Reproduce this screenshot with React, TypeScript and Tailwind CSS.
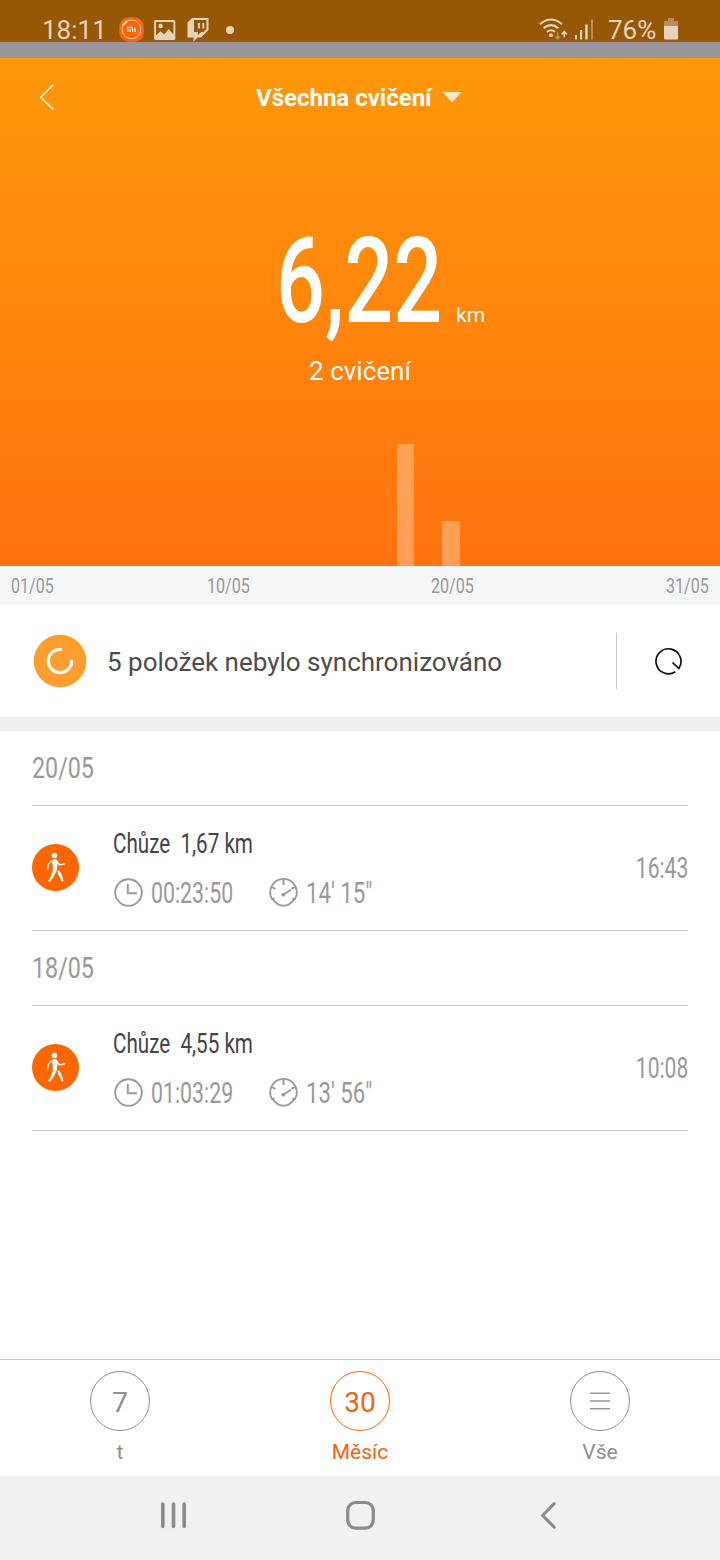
import React from 'react';
import clsx from 'clsx';

const DAYS_IN_MONTH = 31;

// distance per day of the month
const distances: Record<number, number> = { 18: 4.55, 20: 1.67 };
const maxDistance = Math.max(...Object.values(distances));

const axisLabels = ['01/05', '10/05', '20/05', '31/05'];

const groups = [
  { date: '20/05', distance: '1,67 km', duration: '00:23:50', pace: '14′ 15″', time: '16:43' },
  { date: '18/05', distance: '4,55 km', duration: '01:03:29', pace: '13′ 56″', time: '10:08' },
];

// Narrow lettering: Roboto squeezed horizontally, the scale is set per use
const Narrow: React.FC<{ className?: string; children: React.ReactNode }> = ({ className, children }) => (
  <span className={clsx('inline-block whitespace-pre', className)}>{children}</span>
);

const MiIcon = () => (
  <svg width="25" height="25" viewBox="0 0 25 25" fill="none">
    <rect x="0.3" y="0.3" width="24.4" height="24.4" rx="9" fill="#ff6405" />
    <circle cx="12.4" cy="12.3" r="9.4" stroke="#f7dcc0" strokeWidth="1" />
    <path d="M4.4 7.6 7.6 4.6" stroke="#fff" strokeWidth="1.8" strokeLinecap="round" />
    <path d="M8.8 15v-4.6h3.4q1.4 0 1.4 1.4V15M11.2 12v3M16 10.4V15" stroke="#fff" strokeWidth="1.2" />
  </svg>
);

const PictureIcon = () => (
  <svg width="22" height="20" viewBox="0 0 22 20" fill="#e6d3bb">
    <path fillRule="evenodd" d="M1.6 0h18.2Q21.3 0 21.3 1.5v17q0 1.5-1.5 1.5H1.6Q.1 20 .1 18.5v-17Q.1 0 1.6 0ZM2 1.9v13.600l4.600-4.300 3.600 3.200 4.500-5.400 4.700 5.400V1.900Z" />
    <circle cx="6.600" cy="6" r="2.200" />
  </svg>
);

const TwitchIcon = () => (
  <svg width="22" height="24" viewBox="0 0 22 24">
    <path fillRule="evenodd" fill="#e6d3bb" d="M5 0h16.500v12L14 19.500h-3.500L6.500 24v-4.500H.5V4.500ZM7 2v12h4v3l3-3h2.500l3-3V2Z" />
    <path d="M11.900 5v5.500M16.300 5v5.500" stroke="#e6d3bb" strokeWidth="1.900" />
  </svg>
);

const WifiIcon = () => (
  <svg width="29" height="24" viewBox="0 0 29 24" fill="none" stroke="#e6d3bb" strokeWidth="2">
    <path d="M1 6.300Q12 -3.200 23 6.300M4.600 10.300Q12 4 19.400 10.300M8 14Q12 10.600 16 14" />
    <circle cx="12" cy="17.300" r="2" fill="#e6d3bb" stroke="none" />
    <path d="M18.700 14.500v6M16.300 18.300l2.400 2.500 2.400-2.500" stroke="#b88d57" strokeWidth="1.700" />
    <path d="M25.200 19.300v-5.500M22.700 16.300l2.500-2.700 2.500 2.700" strokeWidth="1.700" />
  </svg>
);

const SignalIcon = () => (
  <svg width="19" height="21" viewBox="0 0 19 21" fill="#e6d3bb">
    <rect x="0" y="16" width="2" height="4.500" />
    <rect x="5" y="11" width="2.200" height="9.500" />
    <rect x="10.200" y="5.500" width="2.500" height="15" />
    <rect x="16" y="0.500" width="2" height="20" fill="#b88d57" />
  </svg>
);

const BatteryIcon = () => (
  <svg className="mb-[2px]" width="14" height="22" viewBox="0 0 14 22">
    <path d="M4 0h6v3h4v6H0V3h4Z" fill="#b88d57" />
    <path d="M0 8h14v12.500q0 1-1 1H1q-1 0-1-1Z" fill="#e6d3bb" />
  </svg>
);

const WalkIcon = () => (
  <svg className="mb-px" width="47" height="47" viewBox="0 0 47 47" fill="#fff">
    <circle cx="23.500" cy="23.500" r="23.500" fill="#ff6600" />
    <circle cx="22.400" cy="11.500" r="2.800" />
    <path d="M20.100 15.900Q22.800 14.200 25.300 15.900L25.500 20 24.900 26Q22.500 33 18 37.700L16.200 36.800Q20.500 30 20.800 25Z" />
    <path d="M25.300 27 27.300 26.600Q30 30 31.500 37L29.400 37.500Q28.500 33 26.300 31Z" />
    <path d="M19.800 16.800 16.300 20.300 15.600 25.200M25.300 18 27.400 20.900 32.600 19.700" fill="none" stroke="#fff" strokeWidth="1.500" strokeLinecap="round" strokeLinejoin="round" />
  </svg>
);

const ClockIcon = () => (
  <svg width="29" height="29" viewBox="0 0 29 29" fill="none" stroke="#999" strokeWidth="1.900">
    <circle cx="14.500" cy="14.500" r="13.300" />
    <path d="M13.800 6v9.200h9" />
  </svg>
);

const PaceIcon = () => (
  <svg width="29" height="29" viewBox="0 0 29 29" fill="none" stroke="#999" strokeWidth="1.900">
    <path d="M4.300 21.800Q1.200 19.600 1.200 14.200A13.300 13.300 0 0 1 27.800 14.200Q27.800 19.600 24.700 21.800Q20 27.700 14.500 27.700T4.300 21.800Z" />
    <path d="M14.500 1.500v5.500M2.900 9l3.600 1.800M26.100 9l-3.600 1.800M2.400 21.200l3.200-.8M26.600 21.200l-3.200-.8M14.500 16.500l7.500-4.700" />
    <circle cx="14.300" cy="16.700" r="1.900" fill="#999" stroke="none" />
  </svg>
);

const StatusBar = () => (
  <header className="flex h-[42px] items-center bg-[#965804] pl-[42px] pr-[42px] pt-[17px] text-[26px] text-[#e6d3bb]">
    <span className="w-[77px] leading-none">18:11</span>
    <MiIcon />
    <span className="ml-[10px]"><PictureIcon /></span>
    <span className="ml-[11px]"><TwitchIcon /></span>
    <span className="ml-[17px] size-2 rounded-full bg-[#e6d3bb]" />
    <span className="ml-auto"><WifiIcon /></span>
    <span className="ml-[7px]"><SignalIcon /></span>
    <span className="ml-[14px] w-[56px] leading-none">76%</span>
    <BatteryIcon />
  </header>
);

const Summary = () => (
  <section className="flex h-[508px] flex-col bg-linear-to-b from-[#ff980a] to-[#ff730f] text-white">
    <div className="flex h-20 items-center">
      <svg className="mb-[2px] ml-[38px]" width="18" height="28" viewBox="0 0 18 28" fill="none" stroke="#fff" strokeWidth="1.500">
        <path d="M15.200 1.800 2.700 14.200l12.500 12.200" />
      </svg>
      <h1 className="ml-[200px] text-[24px] font-bold">Všechna cvičení</h1>
      <svg className="mb-[2px] ml-[10px]" width="20" height="12" viewBox="0 0 20 12" fill="#ffe9cd">
        <path d="M.5 1h19L11 10.500q-1 1-2 0Z" />
      </svg>
    </div>
    <div className="mt-[74px] flex h-[138px] items-baseline pl-[276px]">
      <span className="w-[180px]">
        <Narrow className="origin-left scale-x-[0.73] text-[118px] leading-[140px] font-medium">6,22</Narrow>
      </span>
      <span className="text-[21px]">km</span>
    </div>
    <p className="mt-px text-center text-[26px] leading-[40px]">2 cvičení</p>
    <div className="mt-auto flex h-[122px] items-end px-[7px]">
      {Array.from({ length: DAYS_IN_MONTH }, (_, i) => i + 1).map((day) => (
        <div key={day} className="flex h-full flex-1 items-end justify-center">
          {distances[day] && (
            <div className="w-[17.500px] bg-white/30" style={{ height: `${(distances[day] / maxDistance) * 100}%` }} />
          )}
        </div>
      ))}
    </div>
  </section>
);

const Axis = () => (
  <div className="grid h-[39px] grid-cols-[196px_224px_235px_44px] items-center bg-[#f5f6f8] pt-px pl-[11px] text-[20.500px] leading-none text-[#999]">
    {axisLabels.map((label) => (
      <Narrow key={label} className="origin-left scale-x-[0.785]">{label}</Narrow>
    ))}
  </div>
);

const SyncRow = () => (
  <section className="flex h-[112px] items-center">
    <svg className="ml-[33px]" width="54" height="54" viewBox="0 0 54 54" fill="none">
      <circle cx="27" cy="27" r="26.300" fill="#ff9d2e" />
      <path d="M27.500 15.300A11.700 11.700 0 1 0 38.700 27" stroke="#fff" strokeWidth="3.200" strokeLinecap="round" />
    </svg>
    <p className="ml-[20px] pt-[2px] text-[26px] text-[#4d4d4d]">5 položek nebylo synchronizováno</p>
    <div className="ml-auto flex h-14 w-[104px] items-center border-l border-[#c8c8c8]">
      <svg className="ml-[36px]" width="30" height="30" viewBox="0 0 30 30" fill="none" stroke="#111" strokeWidth="1.700">
        <path d="M22.300 25.800A12.500 12.500 0 1 1 25.800 22.400L19.500 16.500" />
      </svg>
    </div>
  </section>
);

const Workout: React.FC<{ item: (typeof groups)[number] }> = ({ item }) => (
  <div>
    <h2 className="flex h-[75px] items-center border-b border-[#ccc] pb-px text-[30px] text-[#999]">
      <Narrow className="origin-left scale-x-[0.775]">{item.date}</Narrow>
    </h2>
    <div className="flex h-[125px] items-center border-b border-[#ccc] text-[#999]">
      <WalkIcon />
      <div className="ml-[34px] w-[400px]">
        <div className="h-[49px] text-[28px] leading-[49px] text-[#444]">
          <Narrow className="origin-left scale-x-[0.737]">{`Chůze  ${item.distance}`}</Narrow>
        </div>
        <div className="flex h-[49px] items-center text-[29px] leading-none">
          <span className="ml-px"><ClockIcon /></span>
          <span className="ml-[8px] w-[118px] pt-px">
            <Narrow className="origin-left scale-x-[0.735]">{item.duration}</Narrow>
          </span>
          <PaceIcon />
          <Narrow className="ml-[8px] origin-left scale-x-[0.765] pt-px">{item.pace}</Narrow>
        </div>
      </div>
      <Narrow className="ml-auto origin-right scale-x-[0.725] pt-px text-[29px]">{item.time}</Narrow>
    </div>
  </div>
);

const tabs = [
  { label: 't', icon: '7' },
  { label: 'Měsíc', icon: '30', active: true },
  {
    label: 'Vše',
    icon: (
      <svg className="mb-[4px]" width="20" height="18" viewBox="0 0 20 18" stroke="#999" strokeWidth="1.400">
        <path d="M0 1.300h20M0 9h20M0 16.700h20" />
      </svg>
    ),
  },
];

const Tabs = () => (
  <nav className="mt-auto grid h-[117px] grid-cols-3 border-t border-[#c8c8c8]">
    {tabs.map((tab) => (
      <button
        key={tab.label}
        className={clsx('flex flex-col items-center pt-[11px]', tab.active ? 'text-[#f0640f]' : 'text-[#8f8f8f]')}
      >
        <span className="flex size-[60px] items-center justify-center rounded-full border border-current pt-[4px] text-[28px]">
          {tab.icon}
        </span>
        <span className="mt-[6px] text-[21px] leading-[30px]">{tab.label}</span>
      </button>
    ))}
  </nav>
);

const SystemNav = () => (
  <footer className="flex h-[84px] items-center bg-[#f1f1f1] pb-[6px] pl-[160px]">
    <svg width="27" height="28" viewBox="0 0 27 28" stroke="#8b8b8b" strokeWidth="3.600" strokeLinecap="round">
      <path d="M2.800 3v22.400M13.500 3v22.400M24.200 3v22.400" />
    </svg>
    <svg className="ml-[159px]" width="30" height="30" viewBox="0 0 30 30" fill="none" stroke="#8b8b8b" strokeWidth="3.200">
      <rect x="1.700" y="2.500" width="25.600" height="25.600" rx="8" />
    </svg>
    <svg className="ml-[163px]" width="18" height="28" viewBox="0 0 18 28" fill="none" stroke="#8b8b8b" strokeWidth="3" strokeLinecap="round">
      <path d="M15.200 2.600 3.600 14.400l11.600 11.800" />
    </svg>
  </footer>
);

export default function App() {
  return (
    <div className="flex h-[1560px] w-[720px] flex-col overflow-hidden bg-white font-[Roboto,sans-serif]">
      <StatusBar />
      <div className="h-4 bg-[#979797]" />
      <Summary />
      <Axis />
      <SyncRow />
      <div className="h-[14px] bg-[#eceef0]" />
      <main className="px-8">
        {groups.map((item) => (
          <Workout key={item.date} item={item} />
        ))}
      </main>
      <Tabs />
      <SystemNav />
    </div>
  );
}
